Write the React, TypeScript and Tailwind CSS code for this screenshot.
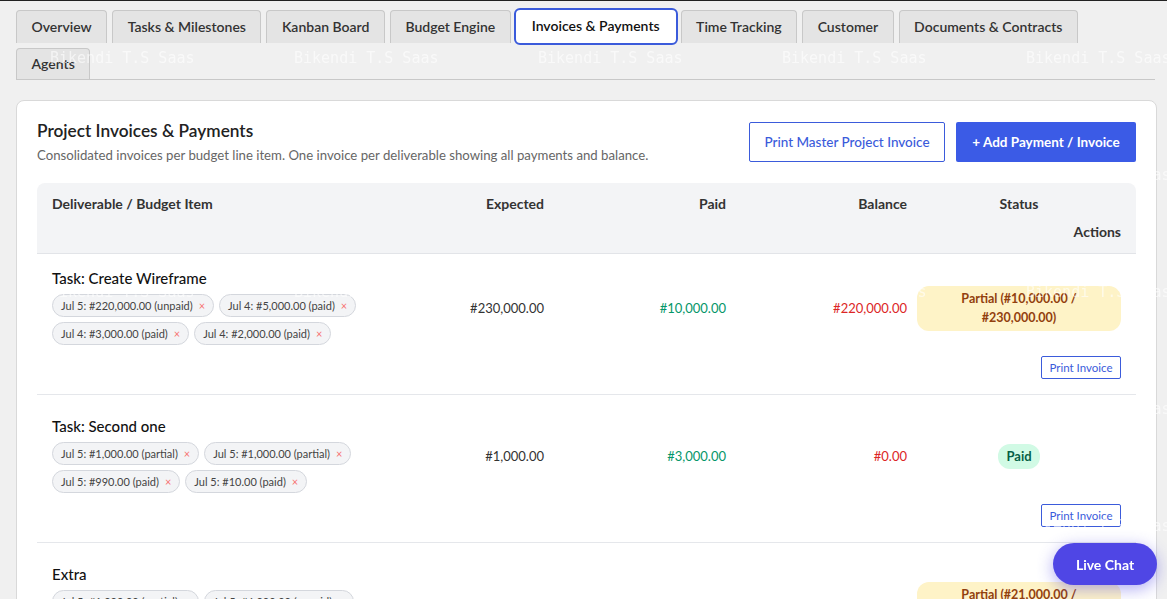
import React from "react";

const tabs = [
  "Overview",
  "Tasks & Milestones",
  "Kanban Board",
  "Budget Engine",
  "Invoices & Payments",
  "Time Tracking",
  "Customer",
  "Documents & Contracts",
];

type Row = {
  title: string;
  chips: string[];
  expected: string;
  paid: string;
  balance: string;
  status: "partial" | "paid";
  statusText: string;
};

const rows: Row[] = [
  {
    title: "Task: Create Wireframe",
    chips: [
      "Jul 5: #220,000.00 (unpaid)",
      "Jul 4: #5,000.00 (paid)",
      "Jul 4: #3,000.00 (paid)",
      "Jul 4: #2,000.00 (paid)",
    ],
    expected: "#230,000.00",
    paid: "#10,000.00",
    balance: "#220,000.00",
    status: "partial",
    statusText: "Partial (#10,000.00 / #230,000.00)",
  },
  {
    title: "Task: Second one",
    chips: [
      "Jul 5: #1,000.00 (partial)",
      "Jul 5: #1,000.00 (partial)",
      "Jul 5: #990.00 (paid)",
      "Jul 5: #10.00 (paid)",
    ],
    expected: "#1,000.00",
    paid: "#3,000.00",
    balance: "#0.00",
    status: "paid",
    statusText: "Paid",
  },
  {
    title: "Extra",
    chips: [
      "Jul 5: #1,000.00 (partial)",
      "Jul 5: #6,000.00 (unpaid)",
      "Jul 5: #20,000.00 (paid)",
    ],
    expected: "#27,000.00",
    paid: "#21,000.00",
    balance: "#6,000.00",
    status: "partial",
    statusText: "Partial (#21,000.00 / #27,000.00)",
  },
];

const gridCols =
  "grid grid-cols-[minmax(0,1fr)_172px_172px_171px_204px] gap-x-[10px]";

const tabBase =
  "flex items-center rounded-t-[4px] border border-b-0 border-[#c8c8c8] bg-[#e4e4e4] px-[14.5px] pb-[2px] text-[14px] font-semibold text-[#333]";

function Watermark() {
  const items: { x: number; y: number }[] = [];
  for (let r = 0; r < 6; r++) {
    for (let c = 0; c < 5; c++) {
      items.push({ x: 50 + c * 244, y: 48 + r * 117 });
    }
  }
  return (
    <div className="pointer-events-none fixed inset-0 z-40 overflow-hidden">
      {items.map((it, i) => (
        <span
          key={i}
          className="absolute whitespace-nowrap font-['DejaVu_Sans_Mono',monospace] text-[15px] leading-[20px] text-white/60"
          style={{ left: it.x, top: it.y }}
        >
          Bikendi T.S Saas
        </span>
      ))}
    </div>
  );
}

function ChipEl({ label }: { label: string }) {
  return (
    <span className="inline-flex h-[23px] items-center gap-[6px] rounded-full border border-[#d4d7dd] bg-[#f3f4f6] pl-[8px] pr-[8px] text-[11px] leading-4 text-[#444]">
      <span>{label}</span>
      <span className="text-[11px] leading-none text-[#f87171]">×</span>
    </span>
  );
}

function TableRow({ row, first }: { row: Row; first: boolean }) {
  return (
    <div
      className={`border-b border-[#e5e7eb] px-[15px] pb-[15px] ${
        first ? "pt-[13px]" : "pt-[20px]"
      }`}
    >
      <div className={`${gridCols} items-center`}>
        <div>
          <div className="text-[15px] font-medium leading-[22px] text-[#111]">
            {row.title}
          </div>
          <div className="mt-[5px] flex flex-wrap gap-[5px]">
            {row.chips.map((c, i) => (
              <ChipEl key={i} label={c} />
            ))}
          </div>
        </div>
        <div className="pt-[5px] text-right text-[13px] text-[#333]">{row.expected}</div>
        <div className="pt-[5px] text-right text-[13px] text-[#059669]">{row.paid}</div>
        <div className="pt-[5px] text-right text-[13px] text-[#dc2626]">{row.balance}</div>
        <div className="pt-[4px] text-center">
          {row.status === "partial" ? (
            <span className="inline-block w-full rounded-[12px] bg-[#fef3c7] px-[20px] pb-[4px] pt-[3px] text-[12.5px] font-bold leading-[19px] text-[#92400e]">
              {row.statusText}
            </span>
          ) : (
            <span className="inline-block rounded-[12px] bg-[#d1fae5] px-[8px] py-[3px] text-[13px] font-bold leading-[19px] text-[#065f46]">
              {row.statusText}
            </span>
          )}
        </div>
      </div>
      <div className="mt-[11px] flex justify-end">
        <button className="h-[23px] w-[80px] rounded-[2px] border border-[#3b5bdb] bg-white text-[11.5px] leading-none text-[#3b5bdb]">
          Print Invoice
        </button>
      </div>
    </div>
  );
}

export default function App() {
  return (
    <div className="min-h-screen border-t border-[#222] bg-[#f0f0f0] pb-10 pl-4 pr-[10px] font-['Lato',sans-serif] text-[#333]">
      {/* Tabs */}
      <div className="mr-[2px] mt-[9px] flex flex-col gap-[5px] border-b border-[#c8c8c8]">
        <div className="flex gap-[5px]">
          {tabs.map((t) => {
            const active = t === "Invoices & Payments";
            return (
              <div
                key={t}
                className={
                  active
                    ? "flex h-[33px] items-center rounded-[4px] bg-white px-[16px] pb-[2px] text-[14px] font-semibold text-[#111] outline-2 outline-[#3b5bdb]"
                    : `${tabBase} h-[33px]`
                }
              >
                {t}
              </div>
            );
          })}
        </div>
        <div className="flex">
          <div className={`${tabBase} h-[31px]`}>Agents</div>
        </div>
      </div>

      {/* Card */}
      <div className="mt-[20px] rounded-[8px] border border-[#d9d9d9] bg-white px-5 pb-5 pt-[19px]">
        <div className="flex items-center justify-between">
          <div>
            <h2 className="text-[17.25px] font-semibold leading-[22px] text-[#222]">
              Project Invoices &amp; Payments
            </h2>
            <p className="mt-[4px] text-[13.2px] leading-[18px] text-[#666]">
              Consolidated invoices per budget line item. One invoice per
              deliverable showing all payments and balance.
            </p>
          </div>
          <div className="flex gap-[11px]">
            <button className="h-[40px] w-[196px] rounded-[2px] border border-[#3b5bdb] bg-white text-[13.5px] font-medium text-[#3b5bdb]">
              Print Master Project Invoice
            </button>
            <button className="h-[40px] w-[180px] rounded-[2px] bg-[#3b5be6] text-[13.5px] font-bold text-white">
              + Add Payment / Invoice
            </button>
          </div>
        </div>

        <div className="mt-[19px]">
          <div
            className={`${gridCols} gap-y-[8px] rounded-t-[8px] border-b border-[#e2e4e8] bg-[#f3f4f6] px-[15px] py-[11px] text-[14px] font-bold leading-[20px] text-[#333]`}
          >
            <div>Deliverable / Budget Item</div>
            <div className="text-right">Expected</div>
            <div className="text-right">Paid</div>
            <div className="text-right">Balance</div>
            <div className="text-center">Status</div>
            <div className="col-span-5 text-right">Actions</div>
          </div>
          {rows.map((r, i) => (
            <TableRow key={i} row={r} first={i === 0} />
          ))}
        </div>
      </div>

      <Watermark />

      <button className="fixed bottom-[14px] right-[10px] z-50 h-[42px] w-[104px] rounded-full bg-[#4f46e5] text-[14px] font-bold text-white shadow-[0_4px_16px_rgba(79,70,229,0.45)]">
        Live Chat
      </button>
    </div>
  );
}
